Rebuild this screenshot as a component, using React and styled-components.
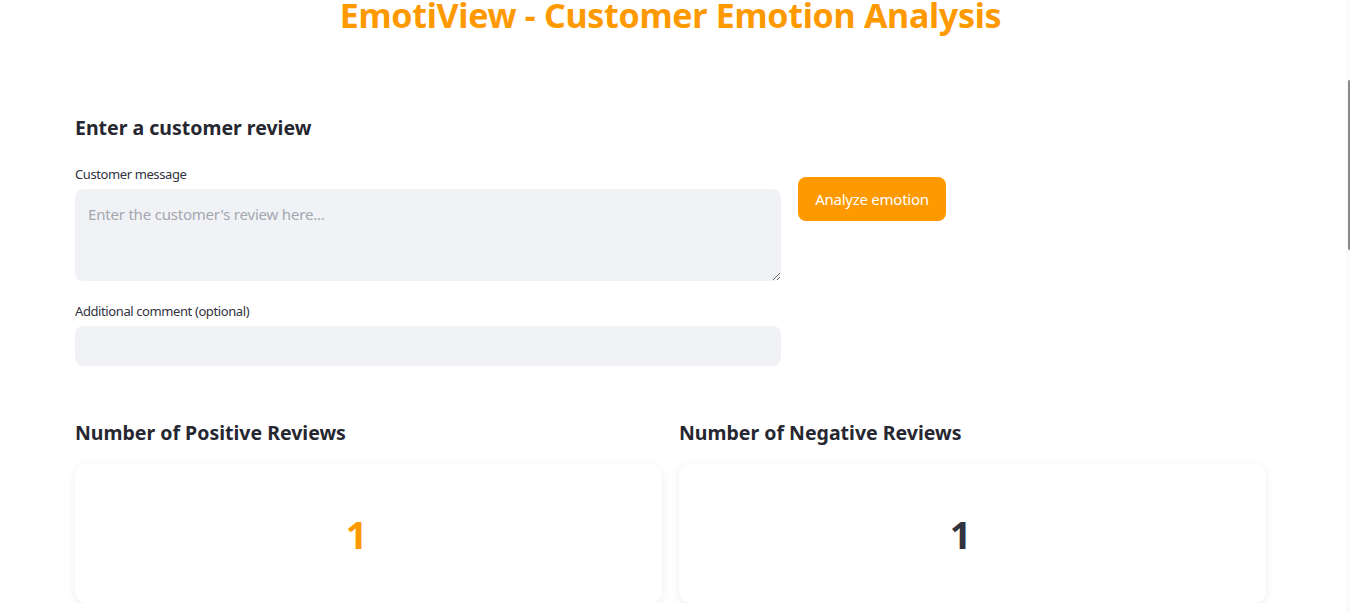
import React from "react";
import styled, { createGlobalStyle } from "styled-components";

const Global = createGlobalStyle`
  html, body { margin: 0; padding: 0; background: #ffffff; }
  body { font-family: "Noto Sans", "Open Sans", sans-serif; color: #31333f; overflow: hidden; }
  * { box-sizing: border-box; }
`;

const ORANGE = "#ff9900";

const Page = styled.main`
  width: 1191px;
  margin-left: 75px;
  display: flex;
  flex-direction: column;
`;

const Title = styled.h1`
  margin: -5px 0 0 0;
  font-size: 34px;
  line-height: 40px;
  font-weight: 700;
  color: ${ORANGE};
  text-align: center;
  letter-spacing: -0.3px;
`;

const SectionTitle = styled.h3`
  margin: 78px 0 0 0;
  font-size: 19.5px;
  line-height: 30px;
  font-weight: 700;
  color: #262730;
`;

const FormRow = styled.div`
  display: grid;
  grid-template-columns: 706px 148px;
  column-gap: 17px;
  margin-top: 21px;
  align-items: start;
`;

const Fields = styled.div`
  display: flex;
  flex-direction: column;
`;

const Field = styled.div`
  display: flex;
  flex-direction: column;
  margin-top: ${(p) => p.$top || 0}px;
`;

const Label = styled.label`
  font-size: 13px;
  line-height: 20px;
  letter-spacing: -0.4px;
  color: #31333f;
  margin-bottom: 5px;
`;

const TextArea = styled.textarea`
  width: 100%;
  height: 92px;
  border: none;
  outline: none;
  border-radius: 8px;
  background: #f0f2f6;
  padding: 14px 13px;
  font-family: inherit;
  font-size: 15px;
  line-height: 22px;
  letter-spacing: -0.2px;
  color: #31333f;
  resize: vertical;
  &::placeholder { color: #a5a7af; }
`;

const Input = styled.input`
  width: 100%;
  height: 40px;
  border: none;
  outline: none;
  border-radius: 8px;
  background: #f0f2f6;
  padding: 0 13px;
  font-family: inherit;
  font-size: 15px;
  color: #31333f;
`;

const Button = styled.button`
  margin-top: 13px;
  height: 44px;
  width: 148px;
  border: none;
  border-radius: 8px;
  background: ${ORANGE};
  color: #ffffff;
  font-family: inherit;
  font-size: 15px;
  letter-spacing: -0.25px;
  font-weight: 400;
  cursor: pointer;
`;

const Stats = styled.div`
  display: grid;
  grid-template-columns: 1fr 1fr;
  column-gap: 17px;
  margin-top: 54px;
`;

const StatColumn = styled.section`
  display: flex;
  flex-direction: column;
`;

const StatTitle = styled.h3`
  margin: 0;
  font-size: 19.5px;
  line-height: 26px;
  font-weight: 700;
  color: #262730;
`;

const Card = styled.div`
  margin-top: 18px;
  height: 139px;
  border-radius: 12px;
  background: #ffffff;
  box-shadow: 0 2px 10px rgba(0, 0, 0, 0.07);
  display: flex;
  align-items: center;
  justify-content: center;
  padding-right: 24px;
`;

const Count = styled.span`
  font-size: 38px;
  font-weight: 700;
  line-height: 1;
  color: ${(p) => (p.$positive ? ORANGE : "#31333f")};
`;

const ScrollTrack = styled.div`
  position: fixed;
  top: 0;
  right: 0;
  width: 4px;
  height: 613px;
  background: #fafafa;
`;

const ScrollThumb = styled.div`
  position: absolute;
  top: 80px;
  right: 0;
  width: 2px;
  height: 170px;
  background: #8a8a8a;
  border-radius: 1px;
`;

export default function App() {
  return (
    <>
      <Global />
      <Page>
        <Title>EmotiView - Customer Emotion Analysis</Title>
        <SectionTitle>Enter a customer review</SectionTitle>
        <FormRow>
          <Fields>
            <Field>
              <Label>Customer message</Label>
              <TextArea placeholder="Enter the customer's review here..." />
            </Field>
            <Field $top={20}>
              <Label>Additional comment (optional)</Label>
              <Input type="text" />
            </Field>
          </Fields>
          <Button>Analyze emotion</Button>
        </FormRow>
        <Stats>
          <StatColumn>
            <StatTitle>Number of Positive Reviews</StatTitle>
            <Card>
              <Count $positive>1</Count>
            </Card>
          </StatColumn>
          <StatColumn>
            <StatTitle>Number of Negative Reviews</StatTitle>
            <Card>
              <Count>1</Count>
            </Card>
          </StatColumn>
        </Stats>
      </Page>
      <ScrollTrack>
        <ScrollThumb />
      </ScrollTrack>
    </>
  );
}
